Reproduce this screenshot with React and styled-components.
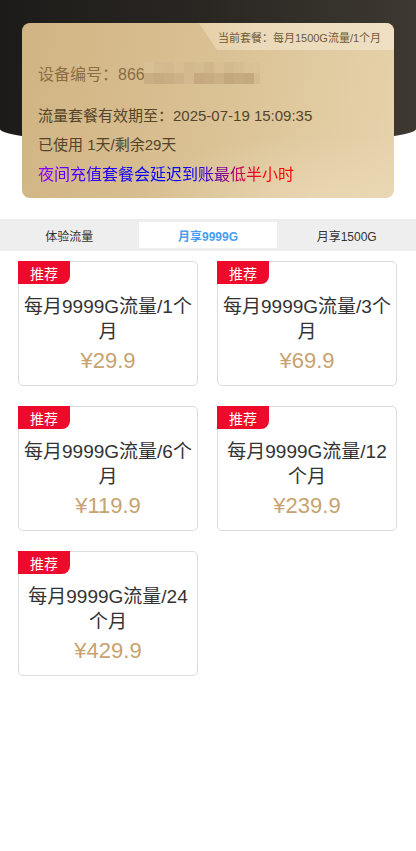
import React from "react";
import styled, { createGlobalStyle } from "styled-components";

const Global = createGlobalStyle`
  html, body { margin: 0; padding: 0; background: #ffffff; }
  body { font-family: "Liberation Sans", "Noto Sans CJK SC", sans-serif; }
  * { box-sizing: border-box; }
`;

const Page = styled.div`
  width: 416px;
  min-height: 851px;
  background: #fff;
`;

const Header = styled.header`
  position: relative;
  padding: 23px 22px 0;
  &::before {
    content: "";
    position: absolute;
    top: 0;
    left: 0;
    right: 0;
    height: 145px;
    background: linear-gradient(90deg, #1d1b19 0%, #2a2723 50%, #3d3931 100%);
    border-radius: 0 0 50% 50% / 0 0 16px 16px;
  }
`;

const InfoCard = styled.section`
  position: relative;
  z-index: 1;
  height: 175px;
  border-radius: 8px;
  padding: 39px 16px 0;
  overflow: hidden;
  background:
    radial-gradient(ellipse 260px 90px at 300px 175px, rgba(240, 226, 196, 0.45), rgba(240, 226, 196, 0) 70%),
    linear-gradient(100deg, #d1b483 0%, #d8be90 40%, #dfc89d 70%, #e6d3ac 100%);
`;

const PlanTag = styled.div`
  position: absolute;
  top: 0;
  right: 0;
  width: 195px;
  height: 27px;
  padding-left: 6px;
  display: flex;
  align-items: center;
  justify-content: center;
  font-size: 11px;
  color: #6f5a38;
  background: linear-gradient(90deg, #e4cfa8 0%, #ebd9b9 30%, #efe0c4 100%);
  clip-path: polygon(0 0, 100% 0, 100% 100%, 18px 100%);
`;

const DeviceRow = styled.div`
  display: flex;
  align-items: center;
  height: 22px;
  font-size: 16px;
  color: #8a6d45;
`;

const InfoLine = styled.div`
  font-size: 15px;
  line-height: 29px;
  color: #54442b;
  margin-top: ${(p) => p.$top || 0}px;
`;

const NoticeLine = styled.div`
  line-height: 32px;
  font-size: 16px;
`;

const GradientText = styled.span`
  display: inline-block;
  background: linear-gradient(90deg, #9000ff 0%, #3000ff 22%, #0000ff 38%, #1000f0 62%, #c00060 78%, #ff0000 88%, #ff0000 100%);
  -webkit-background-clip: text;
  background-clip: text;
  color: transparent;
`;

const Tabs = styled.nav`
  margin-top: 21px;
  display: grid;
  grid-template-columns: repeat(3, 1fr);
  background: #eeeeee;
  padding: 3px 0;
`;

const Tab = styled.div`
  height: 26px;
  display: flex;
  align-items: center;
  justify-content: center;
  font-size: 12px;
  font-weight: ${(p) => (p.$active ? 600 : 400)};
  color: ${(p) => (p.$active ? "#4a9df3" : "#333")};
  background: ${(p) => (p.$active ? "#fff" : "transparent")};
`;

const Grid = styled.div`
  display: grid;
  grid-template-columns: 180px 180px;
  column-gap: 19px;
  row-gap: 20px;
  padding: 10px 18px 0;
`;

const PlanCard = styled.div`
  border: 1px solid #dcdcdc;
  border-radius: 5px;
  height: 125px;
  background: #fff;
  display: flex;
  flex-direction: column;
  align-items: stretch;
`;

const Badge = styled.div`
  margin: -1px 0 0 -1px;
  width: 52px;
  height: 23px;
  background: #ee0a2b;
  color: #fff;
  font-size: 14px;
  display: flex;
  align-items: center;
  justify-content: center;
  border-radius: 0 0 8px 0;
`;

const PlanTitle = styled.div`
  margin-top: 10px;
  padding: 0 4px;
  text-align: center;
  font-size: 19px;
  line-height: 25px;
  color: #333;
`;

const Price = styled.div`
  margin-top: 2px;
  text-align: center;
  font-size: 22px;
  line-height: 30px;
  color: #c8a26f;
`;

const mosaic = [
  ["#d8bf94", "#d4ba8f", "#d3b98d", "#d6bd92", "#d2b88c", "#d5bc90", "#d1b68b", "#d7be93", "#d3b98e", "#d6bd91", "#d9c197", "#dac298"],
  ["#c9ad83", "#c7ab80", "#c9ae84", "#cdb288", "#d2b98e", "#c6a97e", "#c8ac81", "#cbb086", "#c4a87d", "#c7ab80", "#c5a97e", "#d4bb90"],
];

const Mosaic = () => (
  <svg width="116" height="22" viewBox="0 0 116 22" style={{ marginLeft: -1 }}>
    {mosaic.map((row, r) =>
      row.map((c, i) => (
        <rect key={`${r}-${i}`} x={i * 10} y={r * 11} width={i === 11 ? 6 : 10} height="11" fill={c} />
      ))
    )}
  </svg>
);

const plans = [
  { title: "每月9999G流量/1个月", price: "¥29.9" },
  { title: "每月9999G流量/3个月", price: "¥69.9" },
  { title: "每月9999G流量/6个月", price: "¥119.9" },
  { title: "每月9999G流量/12个月", price: "¥239.9" },
  { title: "每月9999G流量/24个月", price: "¥429.9" },
];

export default function App() {
  return (
    <Page>
      <Global />
      <Header>
        <InfoCard>
          <PlanTag>当前套餐：每月1500G流量/1个月</PlanTag>
          <DeviceRow>
            <span>设备编号：866</span>
            <Mosaic />
          </DeviceRow>
          <InfoLine $top={16.5}>流量套餐有效期至：2025-07-19 15:09:35</InfoLine>
          <InfoLine>已使用 1天/剩余29天</InfoLine>
          <NoticeLine>
            <GradientText>夜间充值套餐会延迟到账最低半小时</GradientText>
          </NoticeLine>
        </InfoCard>
      </Header>
      <Tabs>
        <Tab>体验流量</Tab>
        <Tab $active>月享9999G</Tab>
        <Tab>月享1500G</Tab>
      </Tabs>
      <Grid>
        {plans.map((p) => (
          <PlanCard key={p.title}>
            <Badge>推荐</Badge>
            <PlanTitle>{p.title}</PlanTitle>
            <Price>{p.price}</Price>
          </PlanCard>
        ))}
      </Grid>
    </Page>
  );
}
